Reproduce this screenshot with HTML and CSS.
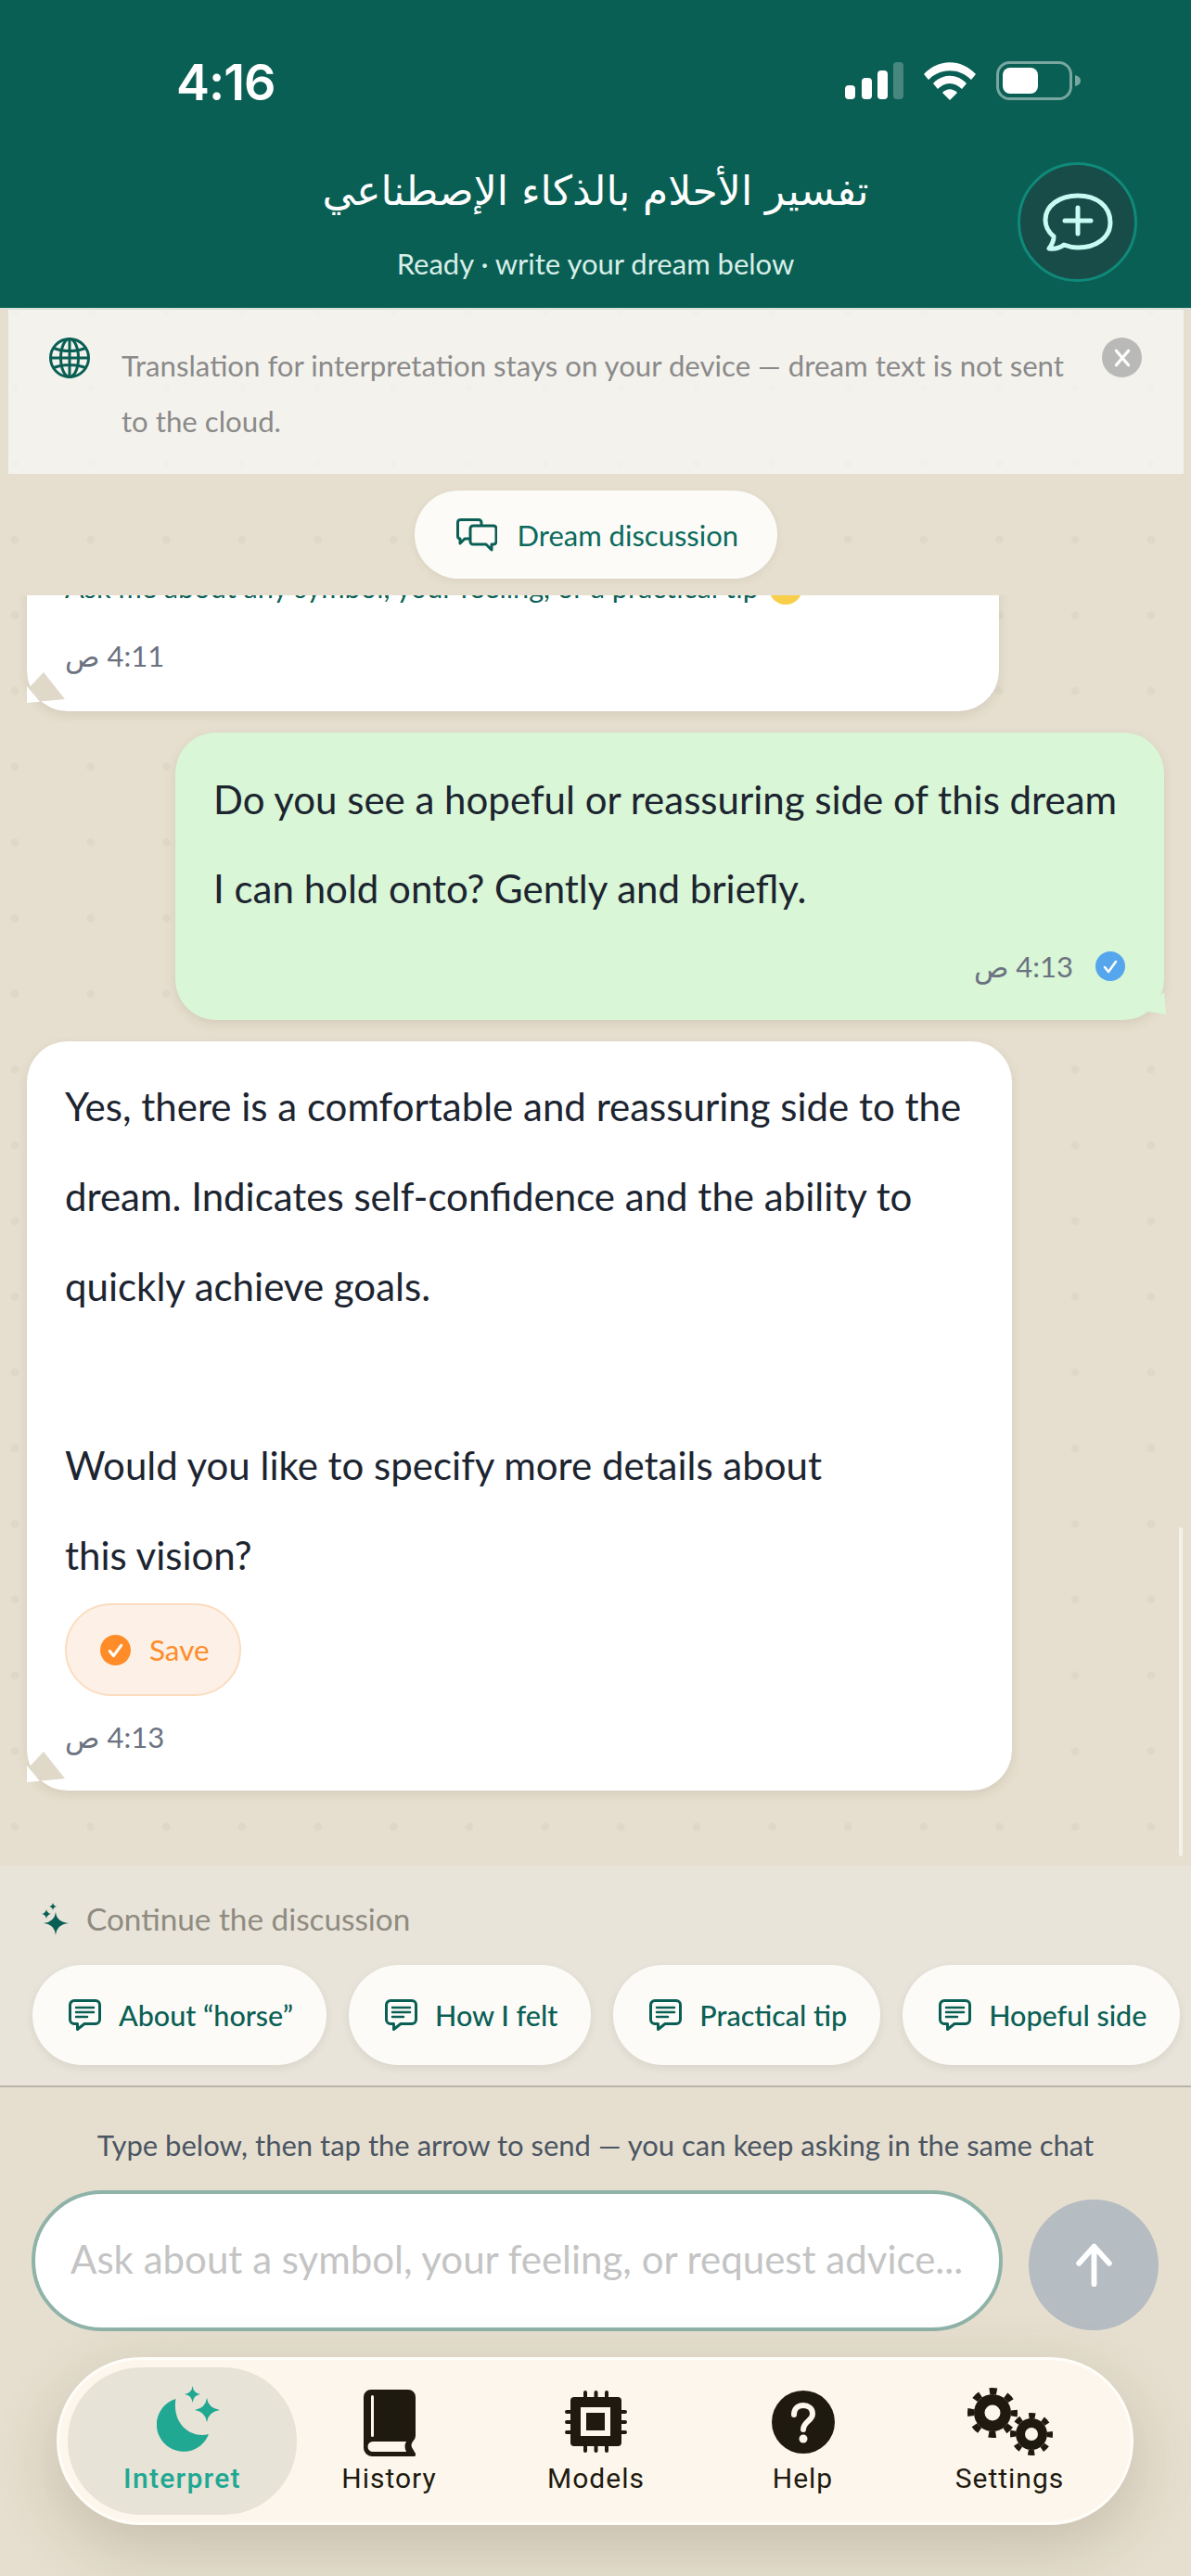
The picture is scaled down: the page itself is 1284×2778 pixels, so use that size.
FILE: index.html
```html
<!DOCTYPE html>
<html lang="en">
<head>
<meta charset="utf-8">
<title>Dream interpretation</title>
<link rel="stylesheet" href="styles.css">
</head>
<body>
<div class="app">
  <header class="top">
    <div class="status">
      <span class="clock">4:16</span>
      <div class="status-icons">
        <svg class="ic-signal" viewBox="0 0 63 40"><rect x="0" y="25" width="11" height="15" rx="4" fill="#fff"/><rect x="18" y="17" width="11" height="23" rx="4" fill="#fff"/><rect x="35" y="9" width="11" height="31" rx="4" fill="#fff"/><rect x="52" y="0" width="11" height="40" rx="4" fill="#fff" opacity=".25"/></svg>
        <svg class="ic-wifi" viewBox="0 0 56 41"><path d="M0 13C16-4 40-4 56 13L51 19C38 6 18 6 5 19Z" fill="#fff"/><path d="M10 23C20 12 36 12 46 23L41 29C33 21 23 21 15 29Z" fill="#fff"/><path d="M20 33C25 28 31 28 36 33L28 41Z" fill="#fff"/></svg>
        <svg class="ic-battery" viewBox="0 0 92 42"><rect x="1.500" y="1.500" width="79" height="39" rx="13" fill="none" stroke="#fff" stroke-opacity=".45" stroke-width="3"/><rect x="7" y="7" width="38" height="28" rx="8" fill="#fff"/><path d="M85 15c4 1 6 3 6 6s-2 5-6 6z" fill="#fff" opacity=".45"/></svg>
      </div>
    </div>
    <div class="titlebar">
      <div class="titles">
        <h1 class="title" lang="ar" dir="rtl">تفسير الأحلام بالذكاء الإصطناعي</h1>
        <p class="subtitle">Ready · write your dream below</p>
      </div>
      <button class="new-chat" type="button" aria-label="New chat">
        <svg viewBox="0 0 76 64" fill="none" stroke="#c8fbf4" stroke-width="5" stroke-linecap="round" stroke-linejoin="round"><path d="M38 3C18 3 3 14 3 29c0 8 3 13 9 18 0 5-2 9-5 13 6 1 12-1 16-4 5 2 10 3 15 3 20 0 35-11 35-27C73 14 58 3 38 3Z"/><path d="M38 16v28M24 30h28"/></svg>
      </button>
    </div>
  </header>

  <main class="chat">
    <div class="notice">
      <svg class="globe" viewBox="0 0 44 44" fill="none" stroke="#0a5f54" stroke-width="3"><circle cx="22" cy="22" r="20.500"/><ellipse cx="22" cy="22" rx="9.500" ry="20.500"/><path d="M22 1.500v41M1.500 22h41M5 11.500c10 4 24 4 34 0M5 32.500c10-4 24-4 34 0"/></svg>
      <p class="notice-text">Translation for interpretation stays on your device — dream text is not sent to the cloud.</p>
      <button class="notice-close" type="button" aria-label="Dismiss">
        <svg viewBox="0 0 20 20" stroke="#fff" stroke-width="3" stroke-linecap="round"><path d="M4 3l12 14M16 3L4 17"/></svg>
      </button>
    </div>

    <div class="topic">
      <span class="topic-pill">
        <svg class="ic-topic" viewBox="0 0 44 36" fill="none" stroke="#0a5f54" stroke-width="3" stroke-linejoin="round"><path d="M4 1.500h20a3 3 0 0 1 3 3V7M14 22H9l-5 5v-5a3 3 0 0 1-2.500-3V4.500a3 3 0 0 1 2.500-3"/><path d="M18 8h22a3 3 0 0 1 3 3v14a3 3 0 0 1-3 3h-2v6l-6-6H18a3 3 0 0 1-3-3V11a3 3 0 0 1 3-3Z"/></svg>
        Dream discussion
      </span>
    </div>

    <div class="messages">
      <article class="bubble bot first">
        <p class="bubble-text green">Ask me about any symbol, your feeling, or a practical tip <svg class="emoji" viewBox="0 0 40 40"><circle cx="20" cy="20" r="19" fill="#f7cf4a"/></svg></p>
        <div class="stamp"><span dir="rtl">4:11 ص</span></div>
        <svg class="tail tail-bot" viewBox="0 0 42 36"><path d="M0 18V36L14 34.700Z" fill="#fff"/><path d="M18 3L41 32 14 34.500 3 19Z" fill="#e0d9c9"/></svg>
      </article>

      <article class="bubble user">
        <p class="bubble-text">Do you see a hopeful or reassuring side of this dream<br>I can hold onto? Gently and briefly.</p>
        <div class="stamp stamp-end">
          <span dir="rtl">4:13 ص</span>
          <svg class="tick" viewBox="0 0 32 32"><circle cx="16" cy="16" r="16" fill="#56a6ee"/><path d="M10 17l4 5 8-11" fill="none" stroke="#fff" stroke-width="2.500" stroke-linecap="round" stroke-linejoin="round"/></svg>
        </div>
        <svg class="tail tail-user" viewBox="0 0 24 24"><path d="M22 0L24 24 0 20Z" fill="#d9f6d6"/></svg>
      </article>

      <article class="bubble bot wide">
        <p class="bubble-text">Yes, there is a comfortable and reassuring side to the dream. Indicates self-confidence and the ability to quickly achieve goals.<br><br>Would you like to specify more details about<br>this vision?</p>
        <button class="save" type="button">
          <svg class="save-ic" viewBox="0 0 32 32"><circle cx="16" cy="16" r="16" fill="#ff8c28"/><path d="M10 17l4 5 8-11" fill="none" stroke="#fff" stroke-width="3" stroke-linecap="round" stroke-linejoin="round"/></svg>
          Save
        </button>
        <div class="stamp save-stamp"><span dir="rtl">4:13 ص</span></div>
        <svg class="tail tail-bot" viewBox="0 0 42 36"><path d="M0 18V36L14 34.700Z" fill="#fff"/><path d="M18 3L41 32 14 34.500 3 19Z" fill="#e0d9c9"/></svg>
      </article>
    </div>
    <i class="scroll-thumb"></i>
  </main>

  <footer class="dock">
    <section class="follow">
      <div class="follow-head">
        <svg class="ic-spark" viewBox="0 0 30 36" fill="#0a5f54"><path d="M13 1Q13.600 4.600 17 5 13.600 5.400 13 9 12.400 5.400 9 5 12.400 4.600 13 1Z"/><path d="M6 8Q6.800 12.200 11 13 6.800 13.800 6 18 5.200 13.800 1 13 5.200 12.200 6 8Z"/><path d="M16 11Q17.200 21.800 30 23 17.200 24.200 16 36 14.800 24.200 3 23 14.800 21.800 16 11Z"/></svg>
        <span>Continue the discussion</span>
      </div>
      <div class="chips">
        <button class="chip" type="button"><svg class="ic-chip" viewBox="0 0 35 34"><use href="#note"/></svg>About “horse”</button>
        <button class="chip" type="button"><svg class="ic-chip" viewBox="0 0 35 34"><use href="#note"/></svg>How I felt</button>
        <button class="chip" type="button"><svg class="ic-chip" viewBox="0 0 35 34"><use href="#note"/></svg>Practical tip</button>
        <button class="chip" type="button"><svg class="ic-chip" viewBox="0 0 35 34"><use href="#note"/></svg>Hopeful side</button>
      </div>
    </section>

    <p class="hint">Type below, then tap the arrow to send — you can keep asking in the same chat</p>

    <div class="composer">
      <div class="field">Ask about a symbol, your feeling, or request advice...</div>
      <button class="send" type="button" aria-label="Send">
        <svg viewBox="0 0 44 52" fill="none" stroke="#fff" stroke-width="6.500" stroke-linecap="round" stroke-linejoin="round"><path d="M22 49V4M4 24L22 4l18 20"/></svg>
      </button>
    </div>

    <nav class="tabs">
      <a class="tab active">
        <svg class="tab-ic ic-moon" viewBox="0 0 68 72" fill="#20a892"><path d="M20.500 14A29 29 0 1 0 56 52C38 57 16 42 20.500 14Z"/><path d="M38.600 0Q39.500 8 47 9 39.500 10 38.600 18 37.700 10 30 9 37.700 8 38.600 0Z"/><path d="M54 13Q55.500 24 68 26 55.500 28 54 39 52.500 28 41 26 52.500 24 54 13Z"/></svg>
        <span>Interpret</span>
      </a>
      <a class="tab">
        <svg class="tab-ic ic-book" viewBox="0 0 56 72"><path fill="#1f1a0f" d="M8 0H48a8 8 0 0 1 8 8V50q0 3-3 6-3 4 0 8l3 5q1 3-2 3H9a9 9 0 0 1-9-9V8a8 8 0 0 1 8-8Z"/><rect x="8" y="6" width="3" height="45" rx="1.500" fill="#fdf6ec"/><path fill="#fdf6ec" d="M10 56H46q-3 5 0 11H10a5.500 5.500 0 0 1 0-11Z"/></svg>
        <span>History</span>
      </a>
      <a class="tab">
        <svg class="tab-ic ic-cpu" viewBox="0 0 67 67"><path d="M22 2v63M33.500 2v63M45 2v63M2 23h63M2 34h63M2 45h63" stroke="#1f1a0f" stroke-width="4" stroke-linecap="round"/><rect x="6" y="7" width="55" height="53" rx="4" fill="#1f1a0f"/><rect x="17" y="18" width="32" height="31" fill="#fdf6ec"/><rect x="23" y="24" width="20" height="19" fill="#1f1a0f"/></svg>
        <span>Models</span>
      </a>
      <a class="tab">
        <svg class="tab-ic ic-help" viewBox="0 0 68 68"><circle cx="34" cy="34" r="34" fill="#1f1a0f"/><path d="M24 26c0-7 5-10 10-10s10 3 10 9c0 8-10 8-10 17" fill="none" stroke="#fdf6ec" stroke-width="6" stroke-linecap="round"/><circle cx="34" cy="52" r="4.500" fill="#fdf6ec"/></svg>
        <span>Help</span>
      </a>
      <a class="tab">
        <svg class="tab-ic ic-gears" viewBox="0 0 92 74" fill="none">
          <circle cx="27" cy="27" r="20" fill="#1f1a0f"/><circle cx="27" cy="27" r="23.500" stroke="#1f1a0f" stroke-width="7" stroke-dasharray="8 10.460" stroke-dashoffset="4"/><circle cx="27" cy="27" r="8.500" fill="#fdf6ec"/>
          <circle cx="69" cy="50" r="17" fill="#1f1a0f"/><circle cx="69" cy="50" r="20" stroke="#1f1a0f" stroke-width="6" stroke-dasharray="7 8.710" stroke-dashoffset="3.500"/><circle cx="69" cy="50" r="7" fill="#fdf6ec"/>
        </svg>
        <span>Settings</span>
      </a>
    </nav>
  </footer>
</div>

<svg class="defs" width="0" height="0">
  <symbol id="note" viewBox="0 0 35 34">
    <path d="M6 1.500H29A4.500 4.500 0 0 1 33.500 6V22A4.500 4.500 0 0 1 29 26.500H17L9.500 32.500V26.500H6A4.500 4.500 0 0 1 1.500 22V6A4.500 4.500 0 0 1 6 1.500Z" fill="none" stroke="#0a5f54" stroke-width="3" stroke-linejoin="round"/>
    <path d="M8 9H27M8 14H27M8 19H20" fill="none" stroke="#0a5f54" stroke-width="2.500" stroke-linecap="round"/>
  </symbol>
</svg>
</body>
</html>
```

FILE: styles.css
```css
* { box-sizing: border-box; }

html, body { margin: 0; padding: 0; }

body {
  font-family: "Lato", "DejaVu Sans", sans-serif;
  color: #1c2430;
}

button { font: inherit; border: 0; padding: 0; background: none; }

p, h1 { margin: 0; }

.defs { position: absolute; }

.app {
  width: 1284px;
  height: 2778px;
  display: flex;
  flex-direction: column;
  overflow: hidden;
  background-color: #e6dfcf;
  background-image: radial-gradient(circle at 16px 10.300px, #dfd8c8 4px, transparent 4.800px);
  background-size: 81.670px 81.670px;
}

/* Header */
.top {
  height: 334px;
  flex: none;
  background: #0a5f54;
  border-bottom: 2px solid #d8e2da;
  color: #fff;
}

.status {
  height: 172px;
  padding: 67px 118px 0 190px;
  display: flex;
  justify-content: space-between;
  align-items: flex-start;
}

.clock {
  font: 600 54px/44px "Inter", sans-serif;
  letter-spacing: -1px;
}

.status-icons { display: flex; align-items: center; gap: 22px; margin-top: -1px; }
.ic-signal { width: 63px; height: 40px; }
.ic-wifi { width: 56px; height: 41px; }
.ic-battery { width: 92px; height: 42px; }

.titlebar {
  position: relative;
  display: flex;
  justify-content: center;
}

.titles { text-align: center; width: 1284px; }

.title {
  font: 400 44px/70px "DejaVu Sans", sans-serif;
  margin-top: -1px;
}

.subtitle {
  margin-top: 23px;
  font-size: 31px;
  line-height: 40px;
  color: #d7efe9;
}

.new-chat {
  position: absolute;
  left: 1097px;
  top: 3px;
  width: 129px;
  height: 129px;
  border-radius: 50%;
  background: #174c48;
  border: 3px solid #0f8a7a;
  display: flex;
  align-items: center;
  justify-content: center;
}

.new-chat svg { width: 76px; height: 64px; }

/* Chat pane */
.chat {
  position: relative;
  flex: 1;
  min-height: 0;
  display: flex;
  flex-direction: column;
}

.notice {
  flex: none;
  height: 177px;
  margin: 0 8px 0 9px;
  background: rgba(250, 250, 248, .72);
  display: flex;
  align-items: flex-start;
  padding: 30px 45px 0 44px;
}

.globe { flex: none; width: 44px; height: 44px; }

.notice-text {
  flex: 1;
  margin: 0 30px 0 34px;
  font-size: 31.200px;
  line-height: 60px;
  color: #8a8a8a;
}

.notice-close {
  flex: none;
  width: 43px;
  height: 43px;
  border-radius: 50%;
  background: #b9b9b7;
  display: flex;
  align-items: center;
  justify-content: center;
}

.notice-close svg { width: 22px; height: 22px; }

.topic { flex: none; display: flex; justify-content: center; margin-top: 18px; }

.topic-pill {
  height: 95px;
  width: 391px;
  border-radius: 48px;
  background: #fcfbf8;
  box-shadow: 0 3px 8px rgba(90, 75, 50, .08);
  display: flex;
  align-items: center;
  gap: 22px;
  padding-left: 45px;
  font-size: 31px;
  color: #0a6a5c;
}

.ic-topic { width: 44px; height: 36px; }

.messages {
  flex: 1;
  min-height: 0;
  margin-top: 18px;
  overflow: hidden;
  display: flex;
  flex-direction: column;
  justify-content: flex-end;
  gap: 23px;
  padding: 0 29px 81px;
}

.bubble {
  position: relative;
  flex: none;
  padding: 22px 41px 38px;
  border-radius: 44px;
  background: #fff;
  box-shadow: 0 4px 12px rgba(90, 75, 50, .12);
}

.bubble-text {
  font-size: 42px;
  line-height: 96.800px;
  color: #1c2430;
}

.bubble.first { width: 1048px; border-radius: 0 0 44px 44px; padding-bottom: 40px; }
.bubble.first .bubble-text { font-size: 30.700px; white-space: nowrap; }
.green, .bubble.first .green { color: #0a5f54; }
.emoji { width: 38px; height: 38px; vertical-align: -8px; margin-left: 2px; }

.bubble.user {
  align-self: flex-end;
  width: 1066px;
  padding-top: 24px;
  background: #d9f6d6;
}

.bubble.wide { width: 1062px; }

.stamp {
  height: 40px;
  font-size: 31px;
  line-height: 40px;
  color: #6b7280;
  display: flex;
  align-items: center;
  gap: 24px;
}

.bubble.first .stamp { margin-top: 4px; }
.bubble.user .stamp { margin-top: 15px; }
.stamp-end { justify-content: flex-end; }
.tick { width: 32px; height: 32px; margin-right: 1px; }
.save-stamp { margin-top: 24px; }

.save {
  margin-top: 3px;
  width: 190px;
  height: 100px;
  border-radius: 50px;
  background: #fdf1e7;
  border: 2px solid #fbdcc0;
  color: #ff8c28;
  font-size: 31.500px;
  display: flex;
  align-items: center;
  gap: 20px;
  padding-left: 36px;
}

.save-ic { width: 33px; height: 33px; }

.tail { position: absolute; }
.tail-bot { left: 0; bottom: 9px; width: 42px; height: 36px; }
.tail-user { right: -2px; bottom: 6px; width: 24px; height: 24px; }

.scroll-thumb {
  position: absolute;
  right: 9px;
  top: 1313px;
  width: 4px;
  height: 355px;
  border-radius: 2px;
  background: rgba(255, 255, 255, .55);
}

/* Bottom dock */
.dock {
  flex: none;
  height: 766px;
  background: #e6dfcf;
  display: flex;
  flex-direction: column;
}

.follow {
  height: 239px;
  flex: none;
  background: #e8e4da;
  border-bottom: 2px solid #b9b4a8;
  padding: 35px 0 0 35px;
}

.follow-head {
  display: flex;
  align-items: center;
  gap: 19px;
  height: 44px;
  padding-left: 9px;
  font-size: 33.300px;
  color: #8f8b80;
}

.ic-spark { width: 30px; height: 36px; }

.chips { display: flex; gap: 24px; margin-top: 28px; }

.chip {
  height: 108px;
  border-radius: 54px;
  background: #fcfbf8;
  box-shadow: 0 3px 8px rgba(90, 75, 50, .1);
  display: flex;
  align-items: center;
  gap: 19px;
  padding: 0 36px 0 39px;
  font-size: 30.500px;
  font-weight: 500;
  color: #0a5f54;
  white-space: nowrap;
}

.ic-chip { width: 35px; height: 34px; }

.hint {
  margin-top: 42px;
  text-align: center;
  font-size: 31px;
  line-height: 40px;
  color: #4b5563;
}

.composer {
  margin-top: 29px;
  padding: 0 35px 0 34px;
  display: flex;
  align-items: flex-end;
  gap: 28px;
}

.field {
  flex: 1;
  height: 152px;
  border-radius: 76px;
  border: 4px solid #8fb3a8;
  background: #fff;
  display: flex;
  align-items: center;
  padding: 0 0 4px 38px;
  font-size: 42px;
  color: #c4c4c4;
  white-space: nowrap;
  overflow: hidden;
}

.send {
  flex: none;
  width: 140px;
  height: 141px;
  margin-bottom: 1px;
  border-radius: 50%;
  background: #b5bcc2;
  display: flex;
  align-items: center;
  justify-content: center;
}

.send svg { width: 41px; height: 47px; }

.tabs {
  margin: 28px 62px 0 61px;
  height: 181px;
  border-radius: 91px;
  background: #fdf6ec;
  border: 3px solid #fffdf8;
  box-shadow: 0 22px 70px rgba(70, 55, 30, .2);
  display: flex;
  padding: 8px 0 8px 21px;
}

.tab {
  flex: none;
  width: 223px;
  display: flex;
  flex-direction: column;
  align-items: center;
  justify-content: flex-start;
  font: 400 30px/36px "Roboto", sans-serif;
  letter-spacing: 1px;
  color: #1f1a0f;
  position: relative;
}

.tab span { position: absolute; top: 102px; }

.tab.active {
  width: 247px;
  margin: 0 -12px;
  border-radius: 79px;
  background: #e8e3d7;
  color: #20a892;
  font-weight: 500;
  letter-spacing: 1.300px;
}

.tab-ic { margin-top: 24px; }
.ic-moon { width: 68px; height: 72px; margin: 20px 0 0 13px; }
.ic-book { width: 56px; height: 72px; }
.ic-cpu { width: 67px; height: 67px; margin-top: 25px; }
.ic-help { width: 68px; height: 68px; margin-top: 25px; }
.ic-gears { width: 92px; height: 74px; margin-top: 22px; }
```
